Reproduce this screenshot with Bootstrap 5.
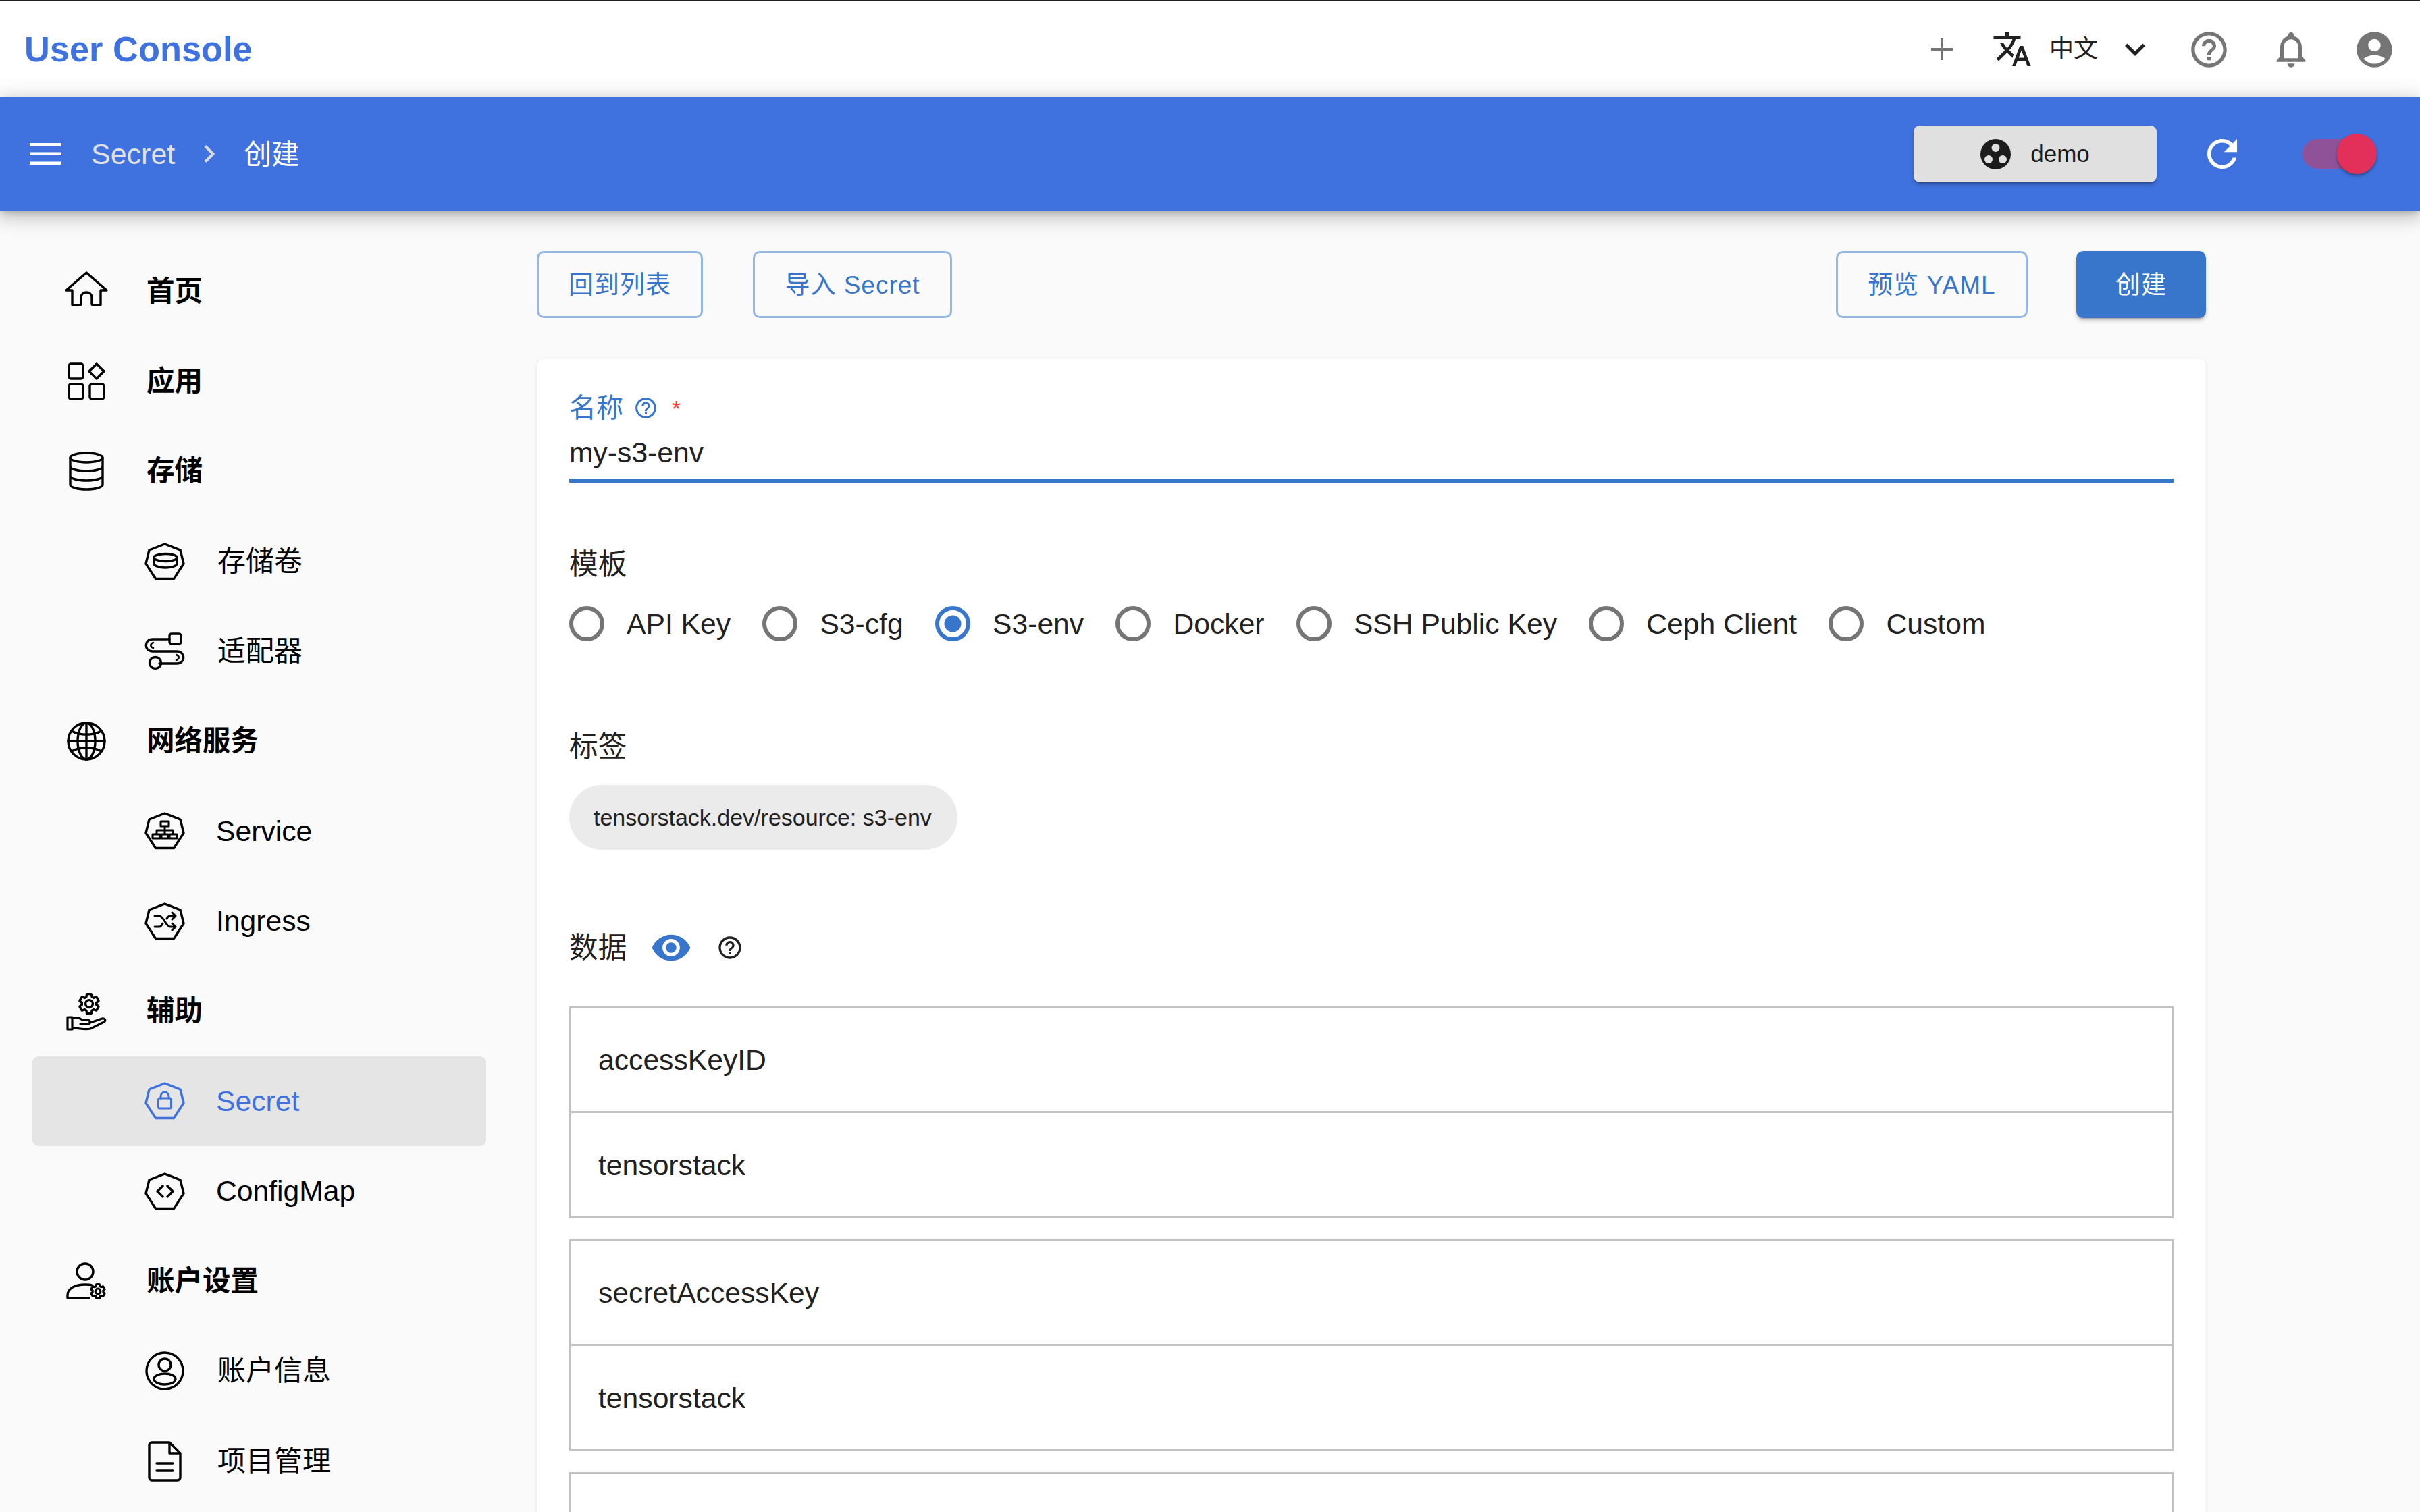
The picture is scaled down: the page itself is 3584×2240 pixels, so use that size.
<!DOCTYPE html>
<html lang="zh">
<head>
    <meta charset="UTF-8">
    <meta name="viewport" content="width=device-width, initial-scale=1.0">
    <title>User Console</title>
    <link href="https://cdn.jsdelivr.net/npm/bootstrap@5.3.0/dist/css/bootstrap.min.css" rel="stylesheet">
    <style>
        html, body { height: 100%; }
        body {
            overflow: hidden;
            background: #fafafa;
            color: #212121;
            font-family: "Liberation Sans", "Noto Sans CJK SC", sans-serif;
            font-size: 42.67px;
        }
        .page-wrap { width: 3584px; height: 2240px; overflow: hidden; }

        /* top bar */
        .top-bar { height: 144px; background: #fff; border-top: 2px solid #222; padding: 0 36px; }
        .brand-name { color: #3f72de; font-size: 52.4px; font-weight: 700; }
        .top-plus { width: 32px; height: 32px; stroke: #757575; stroke-width: 4; fill: none; }
        .top-lang { font-size: 36px; width: 72px; margin-left: 25px; line-height: 1; }
        .top-gray { fill: #757575; }
        .top-dark { fill: #212121; }
        .ms-translate { margin-left: 58px; }
        .ms-chevron { margin-left: 25px; }
        .ms-help { margin-left: 48px; }
        .ms-bell { margin-left: 58px; }
        .ms-account { margin-left: 60px; }

        /* blue bar */
        .blue-bar {
            height: 168px;
            background: #3f72de;
            padding: 0 64px 0 44px;
            position: relative;
            z-index: 2;
            box-shadow: 0 4px 9px -2px rgba(0,0,0,.2), 0 9px 23px 2px rgba(0,0,0,.14), 0 3px 32px 4px rgba(0,0,0,.12);
        }
        .menu-lines { width: 47px; height: 32px; }
        .crumb-from { color: #e0e0e0; margin-left: 44px; line-height: 1; font-size: 43px; }
        .crumb-sep { width: 16px; height: 26px; margin-left: 43px; fill: none; stroke: #ddd; stroke-width: 4; }
        .crumb-now { color: #fff; margin-left: 43px; font-size: 41px; line-height: 1; padding-top: 2px; }
        .demo-btn {
            width: 360px;
            height: 84px;
            background: #e0e0e0;
            color: #1c1c1c;
            border: 0;
            border-radius: 9px;
            font-size: 35px;
            box-shadow: 0 3px 3px -2px rgba(0,0,0,.3), 0 4px 6px rgba(0,0,0,.18);
            gap: 29px;
        }
        .demo-btn:hover { background: #e0e0e0; }
        .refresh-icon { width: 66px; height: 66px; fill: #fff; margin-left: 64px; }
        .mode-switch { width: 110px; height: 60px; margin-left: 86px; position: relative; }
        .mode-track { position: absolute; left: 0; top: 8px; width: 90px; height: 44px; border-radius: 22px; background: #8f5299; }
        .mode-thumb {
            position: absolute; left: 51px; top: 0; width: 59px; height: 60px; border-radius: 50%;
            background: #e3305a;
            box-shadow: 0 2px 4px -1px rgba(0,0,0,.3), 0 3px 5px rgba(0,0,0,.2);
        }

        /* sidebar */
        .side-col { width: 795px; padding: 53px 75px 0 48px; flex: none; }
        .side-item {
            height: 133.3px;
            flex-shrink: 0;
            border-radius: 9px;
            color: #000;
            padding: 0;
            font-size: 41.5px;
            line-height: 1;
            text-decoration: none;
        }
        .side-item:hover { color: #000; }
        .side-item.head { font-weight: 700; }
        .side-item.head .side-ico { width: 64px; margin-left: 48px; margin-right: 57px; }
        .side-item.sub { font-size: 42px; }
        .side-item.sub .side-ico { width: 60px; margin-left: 166px; margin-right: 48px; }
        .side-ico { display: flex; justify-content: center; flex: none; }
        .side-latin { font-size: 42.67px; margin-left: -2px; }
        .side-item svg { fill: none; stroke: #000; stroke-width: 3.4; stroke-linejoin: round; stroke-linecap: round; }
        .side-item svg.gear-big { stroke-width: 2.3; }
        .side-item svg.gear-small { stroke-width: 2.8; }
        .home-ico { margin-top: -8px; }
        .side-item.picked, .side-item.picked:hover { background: #e5e5e5; color: #3f72de; }
        .side-item.picked svg { stroke: #3f72de; }

        /* main */
        .main-col { width: 2472px; padding-top: 60px; flex: none; }
        .tool-row { height: 99px; margin-bottom: 61px; }
        .act-btn {
            height: 99px;
            padding: 2px 0 0;
            font-size: 37px;
            letter-spacing: 1px;
            color: #3876cc;
            background: transparent;
            border: 3px solid #94b8e4;
            border-radius: 10px;
        }
        .act-btn:hover { color: #3876cc; background: transparent; border-color: #94b8e4; }
        .w-back { width: 246px; }
        .w-import { width: 295px; margin-left: 74px; }
        .w-yaml { width: 284px; }
        .w-create {
            width: 192px;
            margin-left: 72px;
            background: #3876cc;
            border-color: #3876cc;
            color: #fff;
            box-shadow: 0 3px 3px -2px rgba(0,0,0,.3), 0 4px 6px rgba(0,0,0,.18);
        }
        .w-create:hover { background: #3876cc; border-color: #3876cc; color: #fff; }

        .form-panel {
            height: 1800px;
            border: 0;
            border-radius: 11px 11px 0 0;
            background: #fff;
            padding: 48px 48px 0;
            box-shadow: 0 2px 4px -1px rgba(0,0,0,.07), 0 1px 8px rgba(0,0,0,.06);
        }
        .form-panel > * { flex-shrink: 0; }
        .name-label { height: 48px; color: #3876cc; font-size: 40px; line-height: 48px; }
        .name-help { width: 37px; height: 37px; fill: #3876cc; margin-left: 15px; }
        .name-star { color: #f44336; font-size: 34px; margin-left: 20px; line-height: 1; align-self: flex-start; padding-top: 8px; }
        .name-value { height: 60px; line-height: 60px; margin-top: 12px; margin-bottom: 9px; }
        .name-line { height: 6px; background: #3876cc; }
        .sect-title { font-size: 42.67px; line-height: 50px; height: 50px; }
        .kind-title { margin-top: 96px; }
        .kind-row { margin-top: 37px; height: 52px; }
        .form-check.kind-opt { display: flex; align-items: center; padding: 0; margin: 0 47.3px 0 0; min-height: 0; }
        .kind-opt .form-check-input {
            width: 52px; height: 52px; margin: 0 33px 0 0; float: none;
            border: 6px solid #757575;
            background-color: #fff;
            flex: none;
        }
        .kind-opt .form-check-input:checked {
            border-color: #3876cc;
            background-color: #fff;
            --bs-form-check-bg-image: radial-gradient(circle, #3876cc 12px, transparent 13px);
            background-size: auto;
        }
        .kind-opt .form-check-input:focus { box-shadow: none; }
        .kind-opt .form-check-label { line-height: 52px; }
        .tag-title { margin-top: 131px; }
        .tag-pill {
            height: 96px;
            width: 575px;
            margin-top: 32px;
            padding-left: 36px;
            border-radius: 48px;
            background: #ebebeb;
            font-size: 34px;
        }
        .data-title { margin-top: 120px; margin-bottom: 62px; }
        .eye-ico { width: 62px; height: 62px; fill: #3876cc; margin-left: 35px; }
        .data-help { width: 40px; height: 40px; fill: #212121; margin-left: 36px; }
        .pair-box { margin-bottom: 31px; border-radius: 2px; }
        .pair-box .list-group-item {
            height: 158px;
            border: 3px solid #c2c2c2;
            border-radius: 0;
            padding: 0 0 0 40px;
            display: flex;
            align-items: center;
            color: #212121;
            background: #fff;
        }
        .pair-box .list-group-item + .list-group-item { border-top-width: 0; height: 156px; margin-top: 0; }
    </style>
</head>
<body>
<svg width="0" height="0" class="position-absolute">
    <symbol id="i-help" viewBox="0 0 24 24"><path d="M11 18h2v-2h-2v2zm1-16C6.48 2 2 6.48 2 12s4.48 10 10 10 10-4.48 10-10S17.52 2 12 2zm0 18c-4.41 0-8-3.59-8-8s3.59-8 8-8 8 3.59 8 8-3.59 8-8 8zm0-14c-2.21 0-4 1.79-4 4h2c0-1.1.9-2 2-2s2 .9 2 2c0 2-3 1.75-3 5h2c0-2.25 3-2.5 3-5 0-2.21-1.79-4-4-4z"/></symbol>
    <symbol id="i-hept" viewBox="0 0 60 56"><path d="M30 2 L53 11 L58 31 L43.500 53.500 H16.500 L2 31 L7 11 Z"/></symbol>
    <symbol id="i-gear" viewBox="0 0 24 24"><path d="M19.14 12.94c.04-.3.06-.61.06-.94 0-.32-.02-.64-.07-.94l2.03-1.58c.18-.14.23-.41.12-.61l-1.92-3.32c-.12-.22-.37-.29-.59-.22l-2.39.96c-.5-.38-1.03-.7-1.62-.94l-.36-2.54c-.04-.24-.24-.41-.48-.41h-3.84c-.24 0-.43.17-.47.41l-.36 2.54c-.59.24-1.13.57-1.62.94l-2.39-.96c-.22-.08-.47 0-.59.22L2.740 8.870c-.12.21-.08.47.12.61l2.030 1.580c-.05.3-.09.63-.09.94s.02.64.07.94l-2.030 1.580c-.18.14-.23.41-.12.61l1.920 3.320c.12.22.37.29.59.22l2.390-.96c.5.38 1.030.7 1.620.94l.36 2.540c.05.24.24.41.48.41h3.840c.24 0 .44-.17.47-.41l.36-2.540c.59-.24 1.130-.56 1.620-.94l2.390.96c.22.08.47 0 .59-.22l1.920-3.320c.12-.22.07-.47-.12-.61l-2.010-1.580z"/><circle cx="12" cy="12" r="3.600"/></symbol>
</svg>

<div class="page-wrap d-flex flex-column">
    <header class="top-bar d-flex align-items-center justify-content-between flex-shrink-0">
        <span class="brand-name">User Console</span>
        <div class="d-flex align-items-center">
            <svg class="top-plus" viewBox="0 0 32 32"><path d="M16 0V32M0 16H32"/></svg>
            <svg class="top-dark ms-translate" width="60" height="60" viewBox="0 0 24 24"><path d="M12.870 15.070l-2.540-2.510.03-.03c1.740-1.940 2.980-4.170 3.710-6.530H17V4h-7V2H8v2H1v1.990h11.170C11.500 7.920 10.440 9.750 9 11.350 8.070 10.320 7.300 9.190 6.690 8h-2c.73 1.630 1.730 3.170 2.980 4.560l-5.090 5.020L4 19l5-5 3.110 3.110.76-2.040zM18.500 10h-2L12 22h2l1.120-3h4.750L21 22h2l-4.500-12zm-2.620 7l1.620-4.330L19.120 17h-3.240z"/></svg>
            <span class="top-lang">中文</span>
            <svg class="top-dark ms-chevron" width="60" height="60" viewBox="0 0 24 24"><path d="M7.410 8.590L12 13.170l4.590-4.580L18 10l-6 6-6-6 1.410-1.410z"/></svg>
            <svg class="top-gray ms-help" width="63" height="63"><use href="#i-help"/></svg>
            <svg class="top-gray ms-bell" width="64" height="64" viewBox="0 0 24 24"><path d="M12 22c1.100 0 2-.9 2-2h-4c0 1.100.9 2 2 2zm6-6v-5c0-3.070-1.630-5.640-4.500-6.320V4c0-.83-.67-1.500-1.500-1.500s-1.500.67-1.500 1.500v.68C7.640 5.360 6 7.920 6 11v5l-2 2v1h16v-1l-2-2zm-2 1H8v-6c0-2.480 1.510-4.500 4-4.500s4 2.020 4 4.500v6z"/></svg>
            <svg class="top-gray ms-account" width="63" height="63" viewBox="0 0 24 24"><path d="M12 2C6.480 2 2 6.480 2 12s4.480 10 10 10 10-4.480 10-10S17.520 2 12 2zm0 4c1.930 0 3.500 1.570 3.500 3.500S13.930 13 12 13s-3.500-1.570-3.500-3.500S10.070 6 12 6zm0 14c-2.030 0-4.430-.82-6.140-2.880C7.550 15.800 9.680 15 12 15s4.450.8 6.140 2.120C16.430 19.180 14.030 20 12 20z"/></svg>
        </div>
    </header>

    <div class="blue-bar d-flex align-items-center flex-shrink-0">
        <svg class="menu-lines" viewBox="0 0 47 32" fill="#fff"><rect width="47" height="4.500"/><rect y="13.500" width="47" height="4.500"/><rect y="27.500" width="47" height="4.500"/></svg>
        <span class="crumb-from">Secret</span>
        <svg class="crumb-sep" viewBox="0 0 16 26"><path d="M2 1.500L13.500 13L2 24.500"/></svg>
        <span class="crumb-now">创建</span>
        <div class="ms-auto d-flex align-items-center">
            <button class="btn demo-btn d-flex align-items-center justify-content-center p-0">
                <svg width="45" height="45" viewBox="0 0 45 45"><circle cx="22.500" cy="22.500" r="22.500" fill="#1c1c1c"/><circle cx="22.500" cy="13" r="6" fill="#e0e0e0"/><circle cx="12" cy="30" r="6" fill="#e0e0e0"/><circle cx="33" cy="30" r="6" fill="#e0e0e0"/></svg>
                <span>demo</span>
            </button>
            <svg class="refresh-icon" viewBox="0 0 24 24"><path d="M17.650 6.350C16.200 4.900 14.210 4 12 4c-4.420 0-7.990 3.580-7.990 8s3.570 8 7.990 8c3.730 0 6.840-2.550 7.730-6h-2.080c-.82 2.330-3.040 4-5.650 4-3.310 0-6-2.690-6-6s2.690-6 6-6c1.660 0 3.140.69 4.220 1.780L13 11h7V4l-2.350 2.350z"/></svg>
            <div class="mode-switch"><div class="mode-track"></div><div class="mode-thumb"></div></div>
        </div>
    </div>

    <div class="d-flex flex-grow-1" style="min-height:0">
        <nav class="side-col nav flex-column flex-nowrap">
            <a class="side-item head d-flex align-items-center" href="#"><span class="side-ico"><svg class="home-ico" width="64" height="52" viewBox="0 0 64 52"><path d="M32 2 L2 28 H11 V49 Q11 50 12 50 H22 Q24 50 24 48 V38 a8 7 0 0 1 16 0 V48 Q40 50 42 50 H52 Q53 50 53 49 V28 H62 Z"/></svg></span>首页</a>
            <a class="side-item head d-flex align-items-center" href="#"><span class="side-ico"><svg width="56" height="56" viewBox="0 0 56 56"><rect x="2" y="2" width="21" height="22" rx="3"/><path d="M43 2 L54 13 L43 24 L32 13 Z"/><rect x="2" y="32" width="21" height="22" rx="3"/><rect x="33" y="32" width="21" height="22" rx="3"/></svg></span>应用</a>
            <a class="side-item head d-flex align-items-center" href="#"><span class="side-ico"><svg width="52" height="58" viewBox="0 0 52 58"><ellipse cx="26" cy="9" rx="24" ry="7"/><path d="M2 9V49C2 53 13 56 26 56S50 53 50 49V9M2 22C2 26 13 29 26 29S50 26 50 22M2 36C2 40 13 43 26 43S50 40 50 36"/></svg></span>存储</a>
            <a class="side-item sub d-flex align-items-center" href="#"><span class="side-ico"><svg width="60" height="56" viewBox="0 0 60 56"><use href="#i-hept"/><ellipse cx="31" cy="22" rx="17" ry="5.500"/><path d="M14 22V31C14 34 21 37 31 37S48 34 48 31V22"/></svg></span>存储卷</a>
            <a class="side-item sub d-flex align-items-center" href="#"><span class="side-ico"><svg width="60" height="56" viewBox="0 0 60 56"><rect x="37" y="2" width="17" height="15" rx="3"/><path d="M37 10H12C-1 10 -1 28 12 28H48C61 28 61 46 48 46H22"/><circle cx="16" cy="45" r="8.500"/><path style="stroke-width:2.500" d="M13 15C8 17 8 21 13 23M47 33C52 35 52 39 47 41"/></svg></span>适配器</a>
            <a class="side-item head d-flex align-items-center" href="#"><span class="side-ico"><svg width="58" height="58" viewBox="0 0 58 58"><circle cx="29" cy="29" r="27"/><ellipse cx="29" cy="29" rx="13" ry="27"/><path d="M29 2V56M2 29H56M7 14C20 21 38 21 51 14M7 44C20 37 38 37 51 44"/></svg></span>网络服务</a>
            <a class="side-item sub d-flex align-items-center" href="#"><span class="side-ico"><svg width="60" height="56" viewBox="0 0 60 56"><use href="#i-hept"/><g style="stroke-width:3"><rect x="24" y="14" width="12" height="7"/><path d="M30 21V27M18 27H42M18 27V32M42 27V32M30 27V32"/><rect x="12" y="33" width="11" height="6"/><rect x="25" y="33" width="10" height="6"/><rect x="37" y="33" width="11" height="6"/></g></svg></span><span class="side-latin">Service</span></a>
            <a class="side-item sub d-flex align-items-center" href="#"><span class="side-ico"><svg width="60" height="56" viewBox="0 0 60 56"><use href="#i-hept"/><path style="stroke-width:3" d="M15 20H22C28 20 32 36 38 36H46M15 36H22C24 36 26 33 27 31M33 24C34 22 36 20 38 20H46M41 15L46 20L41 25M41 31L46 36L41 41"/></svg></span><span class="side-latin">Ingress</span></a>
            <a class="side-item head d-flex align-items-center" href="#"><span class="side-ico"><svg width="60" height="58" viewBox="0 0 60 58"><svg class="gear-big" x="16" y="0" width="36" height="36" viewBox="0 0 24 24"><use href="#i-gear"/></svg><path style="stroke-width:3.200" d="M2 38H9V56H2ZM9 40C15 37 20 39 24 42H32C36 42 36 48 32 48H21M36 46L53 40C58 39 59 43 56 45L36 55C32 56 20 56 9 53"/></svg></span>辅助</a>
            <a class="side-item sub picked d-flex align-items-center" href="#"><span class="side-ico"><svg width="60" height="56" viewBox="0 0 60 56"><use href="#i-hept"/><rect style="stroke-width:3" x="20.500" y="24" width="19" height="15" rx="2"/><path style="stroke-width:3" d="M24 24V21A6 6 0 0 1 36 21V24"/></svg></span><span class="side-latin">Secret</span></a>
            <a class="side-item sub d-flex align-items-center" href="#"><span class="side-ico"><svg width="60" height="56" viewBox="0 0 60 56"><use href="#i-hept"/><path d="M27 20L19 28L27 36M34 20L42 28L34 36"/></svg></span><span class="side-latin">ConfigMap</span></a>
            <a class="side-item head d-flex align-items-center" href="#"><span class="side-ico"><svg width="60" height="56" viewBox="0 0 60 56"><circle cx="28" cy="14" r="12"/><path d="M2 53V49C2 38 14 33 28 33C32 33 35 33 38 34M2 53H34"/><svg class="gear-small" x="34" y="30" width="26" height="26" viewBox="0 0 24 24"><use href="#i-gear"/></svg></svg></span>账户设置</a>
            <a class="side-item sub d-flex align-items-center" href="#"><span class="side-ico"><svg width="58" height="58" viewBox="0 0 58 58"><circle cx="29" cy="29" r="27"/><circle cx="29" cy="20" r="9"/><ellipse cx="29" cy="41" rx="16" ry="8"/></svg></span>账户信息</a>
            <a class="side-item sub d-flex align-items-center" href="#"><span class="side-ico"><svg width="50" height="60" viewBox="0 0 50 60"><path d="M6 2H32L48 18V54C48 56 46 58 44 58H6C4 58 2 56 2 54V6C2 4 4 2 6 2ZM32 2V18H48M13 33H37M13 44H37"/></svg></span>项目管理</a>
        </nav>

        <main class="main-col">
            <div class="tool-row d-flex align-items-center">
                <button class="btn act-btn w-back">回到列表</button>
                <button class="btn act-btn w-import">导入 Secret</button>
                <button class="btn act-btn w-yaml ms-auto">预览 YAML</button>
                <button class="btn act-btn w-create">创建</button>
            </div>
            <div class="card form-panel">
                <div class="name-label d-flex align-items-center">名称<svg class="name-help"><use href="#i-help"/></svg><span class="name-star">*</span></div>
                <div class="name-value">my-s3-env</div>
                <div class="name-line"></div>

                <div class="sect-title kind-title">模板</div>
                <div class="kind-row d-flex align-items-center">
                    <div class="form-check kind-opt"><input class="form-check-input" type="radio" name="kind" id="k1"><label class="form-check-label" for="k1">API Key</label></div>
                    <div class="form-check kind-opt"><input class="form-check-input" type="radio" name="kind" id="k2"><label class="form-check-label" for="k2">S3-cfg</label></div>
                    <div class="form-check kind-opt"><input class="form-check-input" type="radio" name="kind" id="k3" checked><label class="form-check-label" for="k3">S3-env</label></div>
                    <div class="form-check kind-opt"><input class="form-check-input" type="radio" name="kind" id="k4"><label class="form-check-label" for="k4">Docker</label></div>
                    <div class="form-check kind-opt"><input class="form-check-input" type="radio" name="kind" id="k5"><label class="form-check-label" for="k5">SSH Public Key</label></div>
                    <div class="form-check kind-opt"><input class="form-check-input" type="radio" name="kind" id="k6"><label class="form-check-label" for="k6">Ceph Client</label></div>
                    <div class="form-check kind-opt"><input class="form-check-input" type="radio" name="kind" id="k7"><label class="form-check-label" for="k7">Custom</label></div>
                </div>

                <div class="sect-title tag-title">标签</div>
                <div class="tag-pill d-flex align-items-center">tensorstack.dev/resource: s3-env</div>

                <div class="sect-title data-title d-flex align-items-center">数据
                    <svg class="eye-ico" viewBox="0 0 24 24"><path d="M12 4.500C7 4.500 2.730 7.610 1 12c1.730 4.390 6 7.500 11 7.500s9.270-3.110 11-7.500c-1.730-4.390-6-7.500-11-7.500zM12 17c-2.760 0-5-2.240-5-5s2.240-5 5-5 5 2.240 5 5-2.240 5-5 5zm0-8c-1.660 0-3 1.340-3 3s1.340 3 3 3 3-1.340 3-3-1.340-3-3-3z"/></svg>
                    <svg class="data-help"><use href="#i-help"/></svg>
                </div>

                <div class="list-group pair-box">
                    <div class="list-group-item">accessKeyID</div>
                    <div class="list-group-item">tensorstack</div>
                </div>
                <div class="list-group pair-box">
                    <div class="list-group-item">secretAccessKey</div>
                    <div class="list-group-item">tensorstack</div>
                </div>
                <div class="list-group pair-box">
                    <div class="list-group-item"></div>
                </div>
            </div>
        </main>
    </div>
</div>
<script src="https://cdn.jsdelivr.net/npm/bootstrap@5.3.0/dist/js/bootstrap.bundle.min.js"></script>
</body>
</html>
